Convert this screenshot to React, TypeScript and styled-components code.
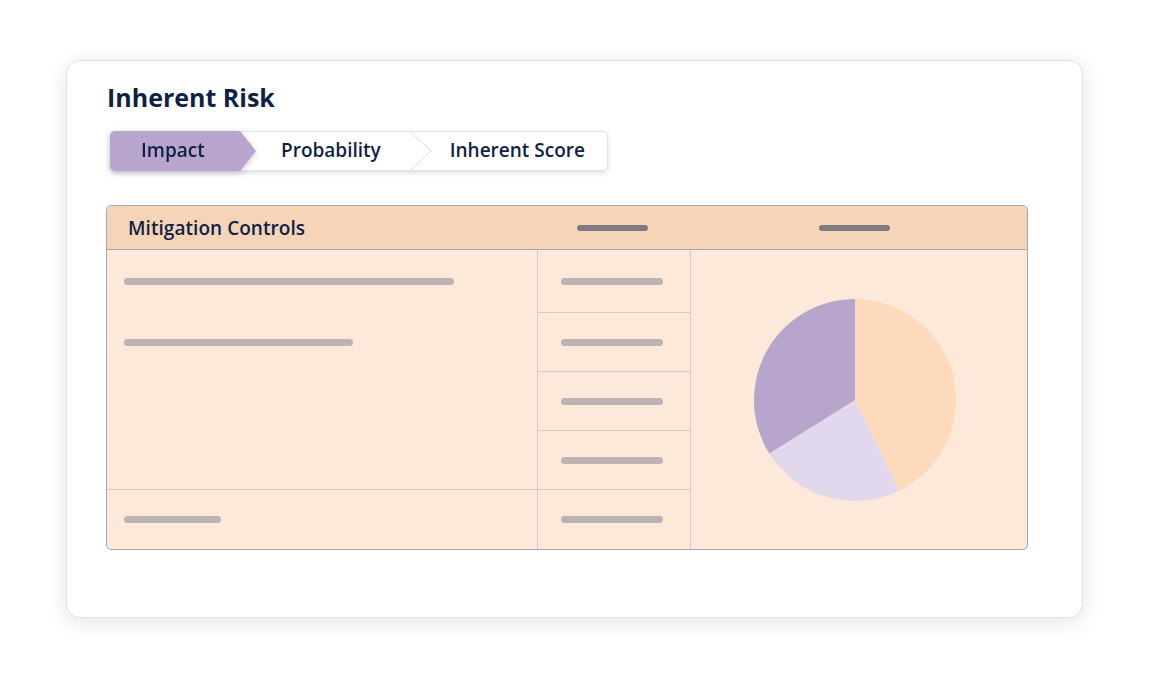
import React from "react";
import styled, { createGlobalStyle } from "styled-components";

const Global = createGlobalStyle`
  html, body { margin: 0; padding: 0; background: #ffffff; }
  body { font-family: "Open Sans", "Noto Sans", sans-serif; color: #0f1f46; }
`;

const Page = styled.div`
  width: 1155px;
  height: 679px;
  padding: 60px 0 0 66px;
  box-sizing: border-box;
`;

const Card = styled.div`
  width: 1017px;
  height: 558px;
  box-sizing: border-box;
  background: #ffffff;
  border: 1px solid #e2e2e9;
  border-radius: 14px;
  box-shadow: 0 4px 20px rgba(40, 40, 90, 0.13);
  padding: 20px 55px 0 39px;
`;

const Title = styled.h1`
  margin: 0;
  font-size: 25px;
  line-height: 32px;
  font-weight: 700;
  color: #0f1f46;
  padding-left: 1px;
`;

const Stepper = styled.div`
  display: inline-flex;
  align-items: stretch;
  height: 40px;
  box-sizing: border-box;
  margin: 18px 0 0 4px;
  background: #ffffff;
  border: 1px solid #e3e3e8;
  border-radius: 5px;
  box-shadow: 0 2px 5px rgba(20, 20, 60, 0.14);
`;

const ActiveWrap = styled.div`
  display: flex;
  margin: -1px -16px -1px -1px;
  position: relative;
  z-index: 1;
  filter: drop-shadow(0 2px 3px rgba(40, 30, 70, 0.22));
`;

const ActiveStep = styled.div`
  width: 146px;
  box-sizing: border-box;
  padding: 0 0 2px 31px;
  display: flex;
  align-items: center;
  background: #b8a5cc;
  border-radius: 5px 0 0 5px;
  clip-path: polygon(0 0, calc(100% - 16px) 0, 100% 50%, calc(100% - 16px) 100%, 0 100%);
`;

const Step = styled.div<{ $pl: number; $pr: number }>`
  display: flex;
  align-items: center;
  padding: 0 ${(p) => p.$pr}px 2px ${(p) => p.$pl}px;
`;

const StepLabel = styled.span`
  font-size: 19px;
  font-weight: 600;
  color: #0f1f46;
  white-space: nowrap;
`;

const ChevronSvg = styled.svg`
  display: block;
  width: 22px;
  height: 38px;
  flex: none;
`;

const Table = styled.div`
  margin-top: 34px;
  width: 922px;
  box-sizing: border-box;
  border: 1px solid #a9a6b0;
  border-radius: 5px;
  overflow: hidden;
  background: #fce9da;
`;

const HeaderRow = styled.div`
  display: grid;
  grid-template-columns: 431px 153px 1fr;
  height: 43px;
  background: #f5d4b7;
  border-bottom: 1px solid #a9a5ad;
`;

const HeaderCell = styled.div<{ $pl: number }>`
  display: flex;
  align-items: center;
  padding-left: ${(p) => p.$pl}px;
`;

const HeaderTitle = styled.span`
  font-size: 19px;
  font-weight: 600;
  letter-spacing: 0.05px;
  color: #0f1f46;
  white-space: nowrap;
`;

const Bar = styled.div<{ $w: number; $dark?: boolean }>`
  width: ${(p) => p.$w}px;
  height: ${(p) => (p.$dark ? 6 : 7)}px;
  border-radius: 4px;
  background: ${(p) => (p.$dark ? "#7f7a82" : "#bdb3b2")};
`;

const Body = styled.div`
  display: grid;
  grid-template-columns: 431px 153px 1fr;
  grid-template-rows: 63px 59px 59px 59px 59px;
`;

const Cell = styled.div<{
  $col: number;
  $row: string;
  $right?: boolean;
  $bottom?: boolean;
  $pl?: number;
}>`
  grid-column: ${(p) => p.$col};
  grid-row: ${(p) => p.$row};
  display: flex;
  align-items: center;
  padding-left: ${(p) => p.$pl ?? 0}px;
  box-sizing: border-box;
  border-right: ${(p) => (p.$right ? "1px solid #d9c8c4" : "none")};
  border-bottom: ${(p) => (p.$bottom ? "1px solid #d9c8c4" : "none")};
`;

const PieCell = styled.div`
  grid-column: 3;
  grid-row: 1 / 6;
  display: flex;
  align-items: center;
  justify-content: center;
  padding-right: 8px;
`;

const PieSvg = styled.svg`
  display: block;
  width: 204px;
  height: 204px;
`;

function Chevron() {
  return (
    <ChevronSvg viewBox="0 0 22 38">
      <polyline points="0.5,0 21,19 0.5,38" fill="none" stroke="#dcdce2" strokeWidth="1" />
    </ChevronSvg>
  );
}

function Pie() {
  return (
    <PieSvg viewBox="0 0 204 204">
      <path d="M102 102 L102 1 A101 101 0 0 1 146.28 192.78 Z" fill="#fedabd" />
      <path d="M102 102 L146.28 192.78 A101 101 0 0 1 16.35 155.52 Z" fill="#e2d8ee" />
      <path d="M102 102 L16.35 155.52 A101 101 0 0 1 102 1 Z" fill="#b8a5cb" />
    </PieSvg>
  );
}

export default function App() {
  return (
    <>
      <Global />
      <Page>
        <Card>
          <Title>Inherent Risk</Title>
          <Stepper>
            <ActiveWrap>
              <ActiveStep>
                <StepLabel>Impact</StepLabel>
              </ActiveStep>
            </ActiveWrap>
            <Step $pl={41} $pr={29}>
              <StepLabel>Probability</StepLabel>
            </Step>
            <Chevron />
            <Step $pl={18} $pr={22}>
              <StepLabel>Inherent Score</StepLabel>
            </Step>
          </Stepper>
          <Table>
            <HeaderRow>
              <HeaderCell $pl={21}>
                <HeaderTitle>Mitigation Controls</HeaderTitle>
              </HeaderCell>
              <HeaderCell $pl={39}>
                <Bar $w={71} $dark />
              </HeaderCell>
              <HeaderCell $pl={128}>
                <Bar $w={71} $dark />
              </HeaderCell>
            </HeaderRow>
            <Body>
              <Cell $col={1} $row="1" $right $pl={17}>
                <Bar $w={330} />
              </Cell>
              <Cell $col={1} $row="2" $right $pl={17}>
                <Bar $w={229} />
              </Cell>
              <Cell $col={1} $row="3 / 5" $right $bottom />
              <Cell $col={1} $row="5" $right $pl={17}>
                <Bar $w={97} />
              </Cell>
              {["1", "2", "3", "4", "5"].map((r) => (
                <Cell key={r} $col={2} $row={r} $right $bottom={r !== "5"} $pl={23}>
                  <Bar $w={102} />
                </Cell>
              ))}
              <PieCell>
                <Pie />
              </PieCell>
            </Body>
          </Table>
        </Card>
      </Page>
    </>
  );
}
